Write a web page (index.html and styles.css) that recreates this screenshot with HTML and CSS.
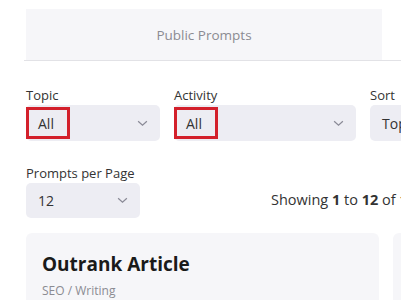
FILE: index.html
```html
<!DOCTYPE html>
<html lang="en">
<head>
  <meta charset="UTF-8">
  <meta name="viewport" content="width=device-width, initial-scale=1.0">
  <title>Public Prompts</title>
  <link rel="stylesheet" href="styles.css">
</head>
<body>
  <div class="page">
    <nav class="tabs">
      <div class="tab">Public Prompts</div>
    </nav>

    <div class="content">
      <div class="filters">
        <div class="field field-topic">
          <label>Topic</label>
          <div class="select">
            <span class="value marked">All</span>
            <svg class="chevron" viewBox="0 0 12 8" width="11" height="7"><path d="M1 1.5l5 4.5 5-4.5" fill="none" stroke="#8a8a96" stroke-width="1.4"/></svg>
          </div>
        </div>
        <div class="field field-activity">
          <label>Activity</label>
          <div class="select">
            <span class="value marked">All</span>
            <svg class="chevron" viewBox="0 0 12 8" width="11" height="7"><path d="M1 1.5l5 4.5 5-4.5" fill="none" stroke="#8a8a96" stroke-width="1.4"/></svg>
          </div>
        </div>
        <div class="field field-sort">
          <label>Sort</label>
          <div class="select">
            <span class="value">Top Votes</span>
            <svg class="chevron" viewBox="0 0 12 8" width="11" height="7"><path d="M1 1.5l5 4.5 5-4.5" fill="none" stroke="#8a8a96" stroke-width="1.4"/></svg>
          </div>
        </div>
      </div>

      <div class="paging">
        <div class="field field-per-page">
          <label>Prompts per Page</label>
          <div class="select">
            <span class="value">12</span>
            <svg class="chevron" viewBox="0 0 12 8" width="11" height="7"><path d="M1 1.5l5 4.5 5-4.5" fill="none" stroke="#8a8a96" stroke-width="1.4"/></svg>
          </div>
        </div>
        <p class="showing">Showing <b>1</b> to <b>12</b> of <b>1,024</b> Entries</p>
      </div>

      <div class="cards">
        <div class="card">
          <h3>Outrank Article</h3>
          <p class="meta">SEO / Writing</p>
        </div>
        <div class="card">
          <h3>Keyword Strategy</h3>
          <p class="meta">SEO / Keywords</p>
        </div>
      </div>
    </div>
  </div>
</body>
</html>
```

FILE: styles.css
```css
body {
  margin: 0;
  font-family: 'Open Sans', 'Noto Sans', sans-serif;
  background: #fff;
  color: #333;
  overflow: hidden;
}

.page {
  width: 760px;
  padding-top: 9px;
}

.tabs {
  margin-left: 24px;
  border-bottom: 1px solid #e2e2e6;
}

.tab {
  margin-left: 2px;
  width: 356px;
  height: 51px;
  background: #f6f6f9;
  color: #8b8b92;
  font-size: 13.5px;
  display: flex;
  align-items: center;
  justify-content: center;
}

.content {
  padding: 0 0 0 26px;
}

.filters {
  display: flex;
  gap: 14px;
  margin-top: 25px;
}

.field label {
  display: block;
  font-size: 13px;
  line-height: 18px;
  color: #333;
}

.select {
  margin-top: 1px;
  height: 36px;
  background: #ededf3;
  border-radius: 5px;
  display: flex;
  align-items: center;
  justify-content: space-between;
  padding: 0 12px 0 2px;
  box-sizing: border-box;
  font-size: 14px;
  color: #333;
}

.value {
  padding: 0 10px;
}

.value.marked {
  display: flex;
  align-items: center;
  width: 44px;
  height: 32px;
  padding: 0 0 0 9px;
  margin-left: -2px;
  box-sizing: border-box;
  border: 3px solid #d3202b;
}

.field-topic { width: 134px; }
.field-activity { width: 182px; }
.field-sort { width: 160px; }

.paging {
  display: flex;
  align-items: flex-end;
  margin-top: 23px;
}

.field-per-page { width: 114px; }

.field-per-page .select {
  height: 35px;
}

.showing {
  margin: 0 0 9px 131px;
  font-size: 14.5px;
  color: #333;
  white-space: nowrap;
}

.showing b {
  font-weight: 700;
}

.cards {
  display: flex;
  gap: 14px;
  margin-top: 15px;
}

.card {
  width: 353px;
  height: 120px;
  padding: 18px 16px;
  box-sizing: border-box;
  background: #f6f6f9;
  border-radius: 6px;
}

.card h3 {
  margin: 0;
  font-size: 19px;
  font-weight: 700;
  color: #1a1a1a;
}

.meta {
  margin: 5px 0 0;
  font-size: 12px;
  color: #8b8b92;
}
```
